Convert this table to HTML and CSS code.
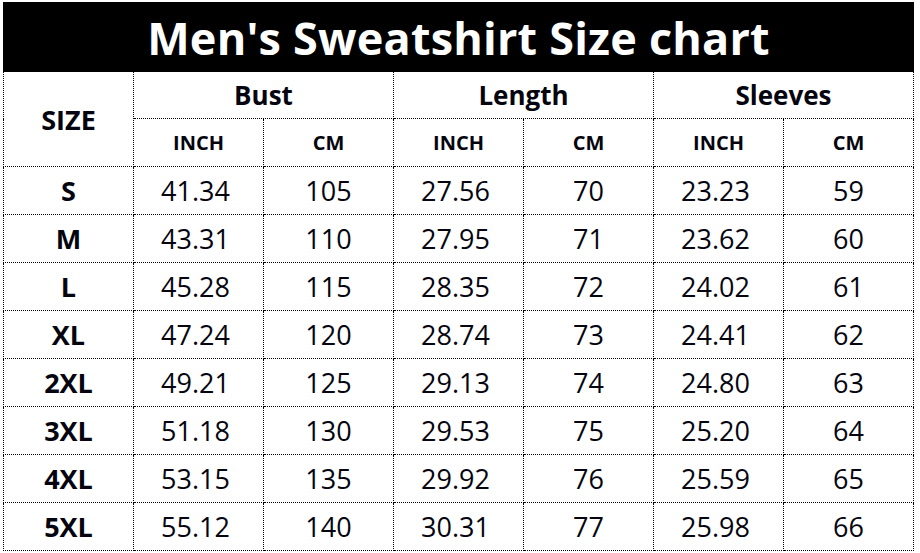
FILE: index.html
```html
<!DOCTYPE html>
<html>
<head>
<meta charset="utf-8">
<link rel="stylesheet" href="styles.css">
</head>
<body>
<div class="wrap">
<table class="chart">
  <colgroup>
    <col class="c"><col class="c"><col class="c"><col class="c"><col class="c"><col class="c"><col class="c">
  </colgroup>
  <thead>
    <tr class="title-row"><th colspan="7" class="title">Men's Sweatshirt Size chart</th></tr>
    <tr class="h1"><th rowspan="2" class="size-h">SIZE</th><th colspan="2">Bust</th><th colspan="2">Length</th><th colspan="2">Sleeves</th></tr>
    <tr class="h2"><th>INCH</th><th>CM</th><th>INCH</th><th>CM</th><th>INCH</th><th>CM</th></tr>
  </thead>
  <tbody>
    <tr><th>S</th><td class="in">41.34</td><td>105</td><td class="in">27.56</td><td>70</td><td class="in">23.23</td><td>59</td></tr>
    <tr><th>M</th><td class="in">43.31</td><td>110</td><td class="in">27.95</td><td>71</td><td class="in">23.62</td><td>60</td></tr>
    <tr><th>L</th><td class="in">45.28</td><td>115</td><td class="in">28.35</td><td>72</td><td class="in">24.02</td><td>61</td></tr>
    <tr><th>XL</th><td class="in">47.24</td><td>120</td><td class="in">28.74</td><td>73</td><td class="in">24.41</td><td>62</td></tr>
    <tr><th>2XL</th><td class="in">49.21</td><td>125</td><td class="in">29.13</td><td>74</td><td class="in">24.80</td><td>63</td></tr>
    <tr><th>3XL</th><td class="in">51.18</td><td>130</td><td class="in">29.53</td><td>75</td><td class="in">25.20</td><td>64</td></tr>
    <tr><th>4XL</th><td class="in">53.15</td><td>135</td><td class="in">29.92</td><td>76</td><td class="in">25.59</td><td>65</td></tr>
    <tr><th>5XL</th><td class="in">55.12</td><td>140</td><td class="in">30.31</td><td>77</td><td class="in">25.98</td><td>66</td></tr>
  </tbody>
</table>
</div>
</body>
</html>
```
FILE: styles.css
```css
html, body {
  margin: 0;
  padding: 0;
  background: #fff;
}
.wrap {
  padding: 2px 0 0 3px;
}
.chart {
  border-collapse: collapse;
  table-layout: fixed;
  width: 911px;
  font-family: "Open Sans", "Noto Sans", sans-serif;
  color: #05050f;
}
.c { width: 130px; }
.chart th, .chart td {
  border: 1px dotted #000;
  padding: 0;
  text-align: center;
  vertical-align: middle;
  line-height: 1;
}
.chart td {
  font-size: 27px;
  font-weight: 400;
  height: 47px;
}
.chart td.in {
  padding-right: 6px;
}
.chart tbody th {
  font-size: 27px;
  font-weight: 700;
  height: 47px;
}
.title-row .title {
  background: #000;
  color: #fff;
  font-size: 45px;
  font-weight: 700;
  height: 68px;
  border: 1px solid #000;
  letter-spacing: 0.2px;
}
.h1 th {
  font-size: 26px;
  font-weight: 700;
  height: 46px;
}
.h2 th {
  font-size: 20px;
  font-weight: 700;
  height: 47px;
}
.size-h {
  font-size: 27px !important;
}
```
